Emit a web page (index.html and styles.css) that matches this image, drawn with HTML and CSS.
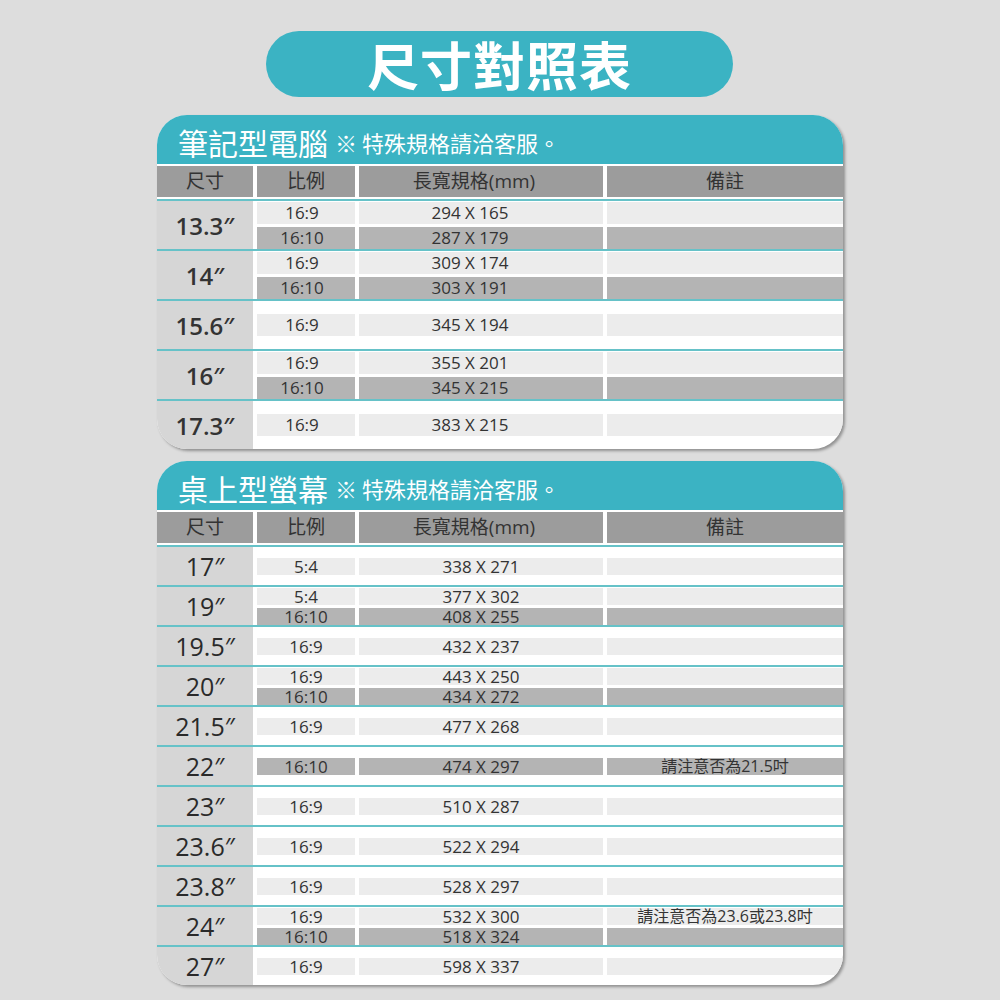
FILE: index.html
```html
<!DOCTYPE html>
<html lang="zh-Hant">
<head>
<meta charset="utf-8">
<title>尺寸對照表</title>
<link rel="stylesheet" href="styles.css">
</head>
<body>
<div class="page">
  <div class="pill">尺寸對照表</div>

  <section class="card laptop">
    <div class="card-head"><span class="cat">筆記型電腦</span><span class="hint">※ 特殊規格請洽客服。</span></div>
    <div class="thead">
      <div class="th">尺寸</div><div class="th">比例</div><div class="th th-spec">長寬規格(mm)</div><div class="th">備註</div>
    </div>
    <div class="group">
      <div class="size">13.3″</div>
      <div class="rows">
        <div class="row"><div class="c ratio">16:9</div><div class="c spec">294 X 165</div><div class="c note"></div></div>
        <div class="row dark"><div class="c ratio">16:10</div><div class="c spec">287 X 179</div><div class="c note"></div></div>
      </div>
    </div>
    <div class="group">
      <div class="size">14″</div>
      <div class="rows">
        <div class="row"><div class="c ratio">16:9</div><div class="c spec">309 X 174</div><div class="c note"></div></div>
        <div class="row dark"><div class="c ratio">16:10</div><div class="c spec">303 X 191</div><div class="c note"></div></div>
      </div>
    </div>
    <div class="group">
      <div class="size">15.6″</div>
      <div class="rows">
        <div class="row"><div class="c ratio">16:9</div><div class="c spec">345 X 194</div><div class="c note"></div></div>
      </div>
    </div>
    <div class="group">
      <div class="size">16″</div>
      <div class="rows">
        <div class="row"><div class="c ratio">16:9</div><div class="c spec">355 X 201</div><div class="c note"></div></div>
        <div class="row dark"><div class="c ratio">16:10</div><div class="c spec">345 X 215</div><div class="c note"></div></div>
      </div>
    </div>
    <div class="group last">
      <div class="size">17.3″</div>
      <div class="rows">
        <div class="row"><div class="c ratio">16:9</div><div class="c spec">383 X 215</div><div class="c note"></div></div>
      </div>
    </div>
  </section>

  <section class="card desktop">
    <div class="card-head"><span class="cat">桌上型螢幕</span><span class="hint">※ 特殊規格請洽客服。</span></div>
    <div class="thead">
      <div class="th">尺寸</div><div class="th">比例</div><div class="th th-spec">長寬規格(mm)</div><div class="th">備註</div>
    </div>
    <div class="group">
      <div class="size">17″</div>
      <div class="rows">
        <div class="row"><div class="c ratio">5:4</div><div class="c spec">338 X 271</div><div class="c note"></div></div>
      </div>
    </div>
    <div class="group">
      <div class="size">19″</div>
      <div class="rows">
        <div class="row"><div class="c ratio">5:4</div><div class="c spec">377 X 302</div><div class="c note"></div></div>
        <div class="row dark"><div class="c ratio">16:10</div><div class="c spec">408 X 255</div><div class="c note"></div></div>
      </div>
    </div>
    <div class="group">
      <div class="size">19.5″</div>
      <div class="rows">
        <div class="row"><div class="c ratio">16:9</div><div class="c spec">432 X 237</div><div class="c note"></div></div>
      </div>
    </div>
    <div class="group">
      <div class="size">20″</div>
      <div class="rows">
        <div class="row"><div class="c ratio">16:9</div><div class="c spec">443 X 250</div><div class="c note"></div></div>
        <div class="row dark"><div class="c ratio">16:10</div><div class="c spec">434 X 272</div><div class="c note"></div></div>
      </div>
    </div>
    <div class="group">
      <div class="size">21.5″</div>
      <div class="rows">
        <div class="row"><div class="c ratio">16:9</div><div class="c spec">477 X 268</div><div class="c note"></div></div>
      </div>
    </div>
    <div class="group">
      <div class="size">22″</div>
      <div class="rows">
        <div class="row dark"><div class="c ratio">16:10</div><div class="c spec">474 X 297</div><div class="c note">請注意否為21.5吋</div></div>
      </div>
    </div>
    <div class="group">
      <div class="size">23″</div>
      <div class="rows">
        <div class="row"><div class="c ratio">16:9</div><div class="c spec">510 X 287</div><div class="c note"></div></div>
      </div>
    </div>
    <div class="group">
      <div class="size">23.6″</div>
      <div class="rows">
        <div class="row"><div class="c ratio">16:9</div><div class="c spec">522 X 294</div><div class="c note"></div></div>
      </div>
    </div>
    <div class="group">
      <div class="size">23.8″</div>
      <div class="rows">
        <div class="row"><div class="c ratio">16:9</div><div class="c spec">528 X 297</div><div class="c note"></div></div>
      </div>
    </div>
    <div class="group">
      <div class="size">24″</div>
      <div class="rows">
        <div class="row"><div class="c ratio">16:9</div><div class="c spec">532 X 300</div><div class="c note">請注意否為23.6或23.8吋</div></div>
        <div class="row dark"><div class="c ratio">16:10</div><div class="c spec">518 X 324</div><div class="c note"></div></div>
      </div>
    </div>
    <div class="group last">
      <div class="size">27″</div>
      <div class="rows">
        <div class="row"><div class="c ratio">16:9</div><div class="c spec">598 X 337</div><div class="c note"></div></div>
      </div>
    </div>
  </section>
</div>
</body>
</html>
```

FILE: styles.css
```css
* { box-sizing: border-box; }
html, body { margin: 0; padding: 0; }
body {
  background: #dddddd;
  font-family: "Open Sans", "Noto Sans CJK TC", sans-serif;
  color: #333;
}
.page {
  width: 1000px;
  height: 1000px;
  padding-top: 31px;
  display: flex;
  flex-direction: column;
  align-items: flex-start;
}
.pill {
  margin-left: 266px;
  width: 467px;
  height: 66px;
  border-radius: 33px;
  background: #3bb3c3;
  color: #fff;
  font-family: "Noto Sans CJK TC", sans-serif;
  font-weight: 700;
  font-size: 52px;
  letter-spacing: 1px;
  line-height: 66px;
  text-align: center;
}
.card {
  margin-left: 157px;
  width: 686px;
  background: #fff;
  border-radius: 30px;
  overflow: hidden;
  box-shadow: 2px 2px 3px rgba(0,0,0,0.35);
}
.laptop { margin-top: 18px; }
.desktop { margin-top: 12px; }

.card-head {
  height: 49px;
  background: #3bb3c3;
  color: #fff;
  display: flex;
  align-items: center;
  padding-left: 21px;
  padding-top: 4px;
  font-family: "Noto Sans CJK TC", sans-serif;
}
.cat { font-size: 30px; font-weight: 400; }
.hint { font-size: 22px; margin-left: 7px; }

.thead {
  margin-top: 2px;
  margin-bottom: 2px;
  display: grid;
  grid-template-columns: 96px 98px 244px 236px;
  column-gap: 4px;
  height: 31px;
}
.th {
  background: #9c9c9c;
  color: #333;
  font-family: "Open Sans", "Noto Sans CJK TC", sans-serif;
  font-size: 19px;
  line-height: 31px;
  text-align: center;
}
.th-spec { padding-right: 14px; }

.group {
  display: flex;
  border-top: 2px solid #66c2c8;
  height: 50px;
}
.desktop .group { height: 40px; }
.size {
  width: 96px;
  flex: none;
  background: #d6d6d6;
  display: flex;
  align-items: center;
  justify-content: center;
  font-size: 24px;
  color: #333;
}
.laptop .size { font-weight: 600; }
.desktop .size { font-weight: 400; font-size: 25px; color: #2a2a2a; }
.rows {
  margin-left: 4px;
  flex: 1;
  display: flex;
  flex-direction: column;
  justify-content: center;
  gap: 3px;
}
.row {
  display: grid;
  grid-template-columns: 98px 244px 236px;
  column-gap: 4px;
}
.c {
  height: 22px;
  line-height: 22px;
  font-size: 17px;
  text-align: center;
  background: #ececec;
  color: #333;
}
.desktop .c { height: 17px; line-height: 17px; }
.row.dark .c { background: #b4b4b4; }
.laptop .ratio { padding-right: 8px; }
.laptop .spec { padding-right: 22px; }
.note { font-family: "Open Sans", "Noto Sans CJK TC", sans-serif; font-size: 16px; }
```
